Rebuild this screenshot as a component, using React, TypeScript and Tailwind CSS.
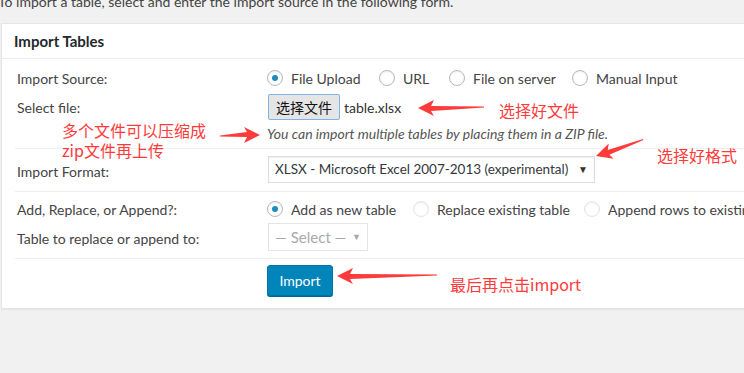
import React from "react";

const font = { fontFamily: 'Lato, "Open Sans", sans-serif' };
const cjk = { fontFamily: '"Noto Sans CJK SC", sans-serif' };

function Radio({ checked, faint }: { checked?: boolean; faint?: boolean }) {
  return (
    <span
      className={`w-4 h-4 shrink-0 rounded-full border bg-white flex items-center justify-center shadow-[inset_0_1px_2px_rgba(0,0,0,0.07)] ${
        faint ? "border-[#e2e4e7]" : "border-[#b4b9be]"
      }`}
    >
      {checked && <span className="w-[6px] h-[6px] rounded-full bg-[#1e8cbe]" />}
    </span>
  );
}

function Option({ label, checked, faint, className }: { label: string; checked?: boolean; faint?: boolean; className?: string }) {
  return (
    <label className={`flex items-center gap-2 whitespace-nowrap ${className ?? ""}`}>
      <Radio checked={checked} faint={faint} />
      <span>{label}</span>
    </label>
  );
}

function ArrowLeft({ w }: { w: number }) {
  // red hand-drawn style arrow pointing left
  return (
    <svg width={w} height="16" viewBox={`0 0 ${w} 16`}>
      <polygon points={`0,8 16,0 13,6 ${w},6.5 ${w},7.5 13,11 16,16`} fill="#ff3a3a" />
    </svg>
  );
}

export default function App() {
  return (
    <div className="relative w-[744px] h-[373px] overflow-hidden bg-[#f1f1f1] text-[#444] text-[14px]" style={font}>
      {/* intro line, cut off at the top */}
      <div className="h-[23px] flex items-start">
        <p className="-mt-[7px] -ml-[2px] leading-[18px] text-[#444] whitespace-nowrap">
          To import a table, select and enter the import source in the following form.
        </p>
      </div>

      {/* Import Tables panel */}
      <div className="ml-[1px] w-[900px] bg-white border border-[#e5e5e5] shadow-[0_1px_1px_rgba(0,0,0,0.04)]">
        <div className="h-[35px] flex items-center px-[12px] border-b border-[#eee]">
          <h2 className="text-[15px] font-bold text-[#23282d]">Import Tables</h2>
        </div>

        <div className="px-[13px]">
          {/* source + file */}
          <div className="pt-[7px] pb-[6px] border-b border-[#eee]">
            <div className="flex items-center h-[24px]">
              <div className="w-[252px] pl-[2px]">Import Source:</div>
              <div className="flex items-center">
                <Option label="File Upload" checked className="w-[112px]" />
                <Option label="URL" className="w-[70px]" />
                <Option label="File on server" className="w-[123px]" />
                <Option label="Manual Input" />
              </div>
            </div>
            <div className="flex items-center h-[26px] mt-[4px]">
              <div className="w-[253px] pl-[2px]">Select file:</div>
              <button
                className="h-[26px] w-[72px] rounded-[2px] border border-[#7eb4ea] bg-[#e5e5e5] text-[#111] text-[14px]"
                style={cjk}
              >
                选择文件
              </button>
              <span className="ml-[4px] text-[#333]">table.xlsx</span>
            </div>
            <div className="h-[18px] mt-[4px] flex items-center pl-[252px] italic text-[#555] text-[14px] whitespace-nowrap">
              You can import multiple tables by placing them in a ZIP file.
            </div>
          </div>

          {/* format */}
          <div className="pt-[7px] pb-[8px] border-b border-[#eee]">
            <div className="flex items-center h-[27px]">
              <div className="w-[253px] pl-[2px] pt-[4px]">Import Format:</div>
              <div className="w-[327px] h-[27px] border border-[#ddd] shadow-[inset_0_1px_2px_rgba(0,0,0,0.07)] flex items-center justify-between pl-[6px] pr-[6px] text-[#32373c] text-[13.5px] whitespace-nowrap">
                <span>XLSX - Microsoft Excel 2007-2013 (experimental)</span>
                <span className="text-[10px] text-[#333]">▼</span>
              </div>
            </div>
          </div>

          {/* add / replace */}
          <div className="pt-[5px] pb-[7px] border-b border-[#eee]">
            <div className="flex items-center h-[24px]">
              <div className="w-[252px] pl-[2px]">Add, Replace, or Append?:</div>
              <div className="flex items-center">
                <Option label="Add as new table" checked className="w-[146px]" />
                <Option label="Replace existing table" faint className="w-[171px]" />
                <Option label="Append rows to existing table" faint />
              </div>
            </div>
            <div className="flex items-center h-[28px] mt-[2px]">
              <div className="w-[253px] pl-[2px] pt-[2px]">Table to replace or append to:</div>
              <div className="w-[100px] h-[28px] border border-[#e5e5e5] flex items-center justify-between pl-[6px] pr-[6px] text-[#a7aaad] text-[15px] whitespace-nowrap">
                <span>— Select —</span>
                <span className="text-[9px]">▼</span>
              </div>
            </div>
          </div>

          {/* submit */}
          <div className="pt-[6px] pb-[12px] pl-[252px]">
            <button className="h-[31px] w-[66px] rounded-[3px] bg-[#0085ba] border border-[#0073aa] shadow-[0_1px_0_#006799] text-white text-[14px]">
              Import
            </button>
          </div>
        </div>
      </div>

      {/* red annotations */}
      <div className="absolute left-[418px] top-[100px]">
        <ArrowLeft w={66} />
      </div>
      <div className="absolute left-[499px] top-[100px] text-[16px] leading-[20px] text-[#ff3a3a]" style={cjk}>
        选择好文件
      </div>

      <div className="absolute left-[62px] top-[120px] text-[16px] leading-[20px] text-[#ff3a3a]" style={cjk}>
        多个文件可以压缩成
        <br />
        zip文件再上传
      </div>
      <div className="absolute left-[220px] top-[127px] rotate-180">
        <ArrowLeft w={40} />
      </div>

      <div className="absolute left-[596px] top-[148px] origin-left -rotate-[18deg]">
        <ArrowLeft w={50} />
      </div>
      <div className="absolute left-[657px] top-[145px] text-[16px] leading-[20px] text-[#ff3a3a]" style={cjk}>
        选择好格式
      </div>

      <div className="absolute left-[337px] top-[268px]">
        <ArrowLeft w={100} />
      </div>
      <div className="absolute left-[450px] top-[274px] text-[16px] leading-[20px] text-[#ff3a3a]" style={cjk}>
        最后再点击import
      </div>
    </div>
  );
}
